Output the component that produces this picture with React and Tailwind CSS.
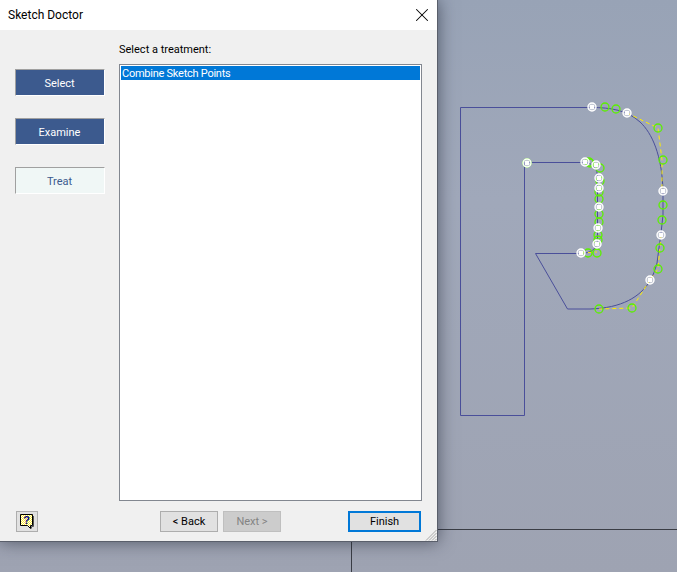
import React from "react";
import { X } from "lucide-react";

const whitePoints = [
  [592, 107], [627, 113], [527, 163], [585, 162], [596, 165], [599, 178], [599, 188], [599, 207],
  [598, 228], [597, 244], [581, 253], [663, 191], [661, 235], [650, 280],
];

const greenPoints = [
  [605, 107], [616, 109], [658, 128], [663, 160], [663, 205], [662, 220], [660, 248], [658, 269],
  [632, 308], [599, 309], [588, 253], [597, 253], [599, 214], [599, 222], [598, 235], [527, 163],
  [590, 163], [600, 168], [600, 181], [599, 199], [598, 240], [599, 192], [589, 162],
];

const SketchBackground = () => (
  <svg className="absolute inset-0" width="677" height="572" viewBox="0 0 677 572">
    <path d="M437.5 529.5H677M351.5 541V572" stroke="#3a3d45" fill="none" />
    <path
      d="M460.5 107.5H592C610 107.5 627 110 640 122C652 133 662 155 663 191V215L661 233L657 263C655 270 653 276 650 281C640 297 622 308 590 309H567.5L535.5 253.5H581C590 253 597 250 597.5 240V178C598 168 592 163 585 162.5H524.5V415.5H460.5Z"
      fill="none"
      stroke="#4a4f9a"
    />
    <g fill="none" stroke="#ffee00" strokeWidth="1" strokeDasharray="4 3">
      <path d="M627 113L658 128L662 160V190" />
      <path d="M650 280L632 308L599 309" />
      <path d="M581 253L597 252" />
      <path d="M661 235L658 269L650 280" />
    </g>
    {greenPoints.map(([x, y], i) => (
      <circle key={i} cx={x} cy={y} r="4" fill="none" stroke="#5cf000" strokeWidth="1.3" />
    ))}
    {whitePoints.map(([x, y], i) => (
      <g key={i}>
        <circle cx={x} cy={y} r="4" fill="#ffffff" fillOpacity="0.4" stroke="#ffffff" strokeWidth="1.4" />
        <rect x={x - 2} y={y - 2} width="4" height="4" fill="#ffffff" />
      </g>
    ))}
  </svg>
);

const StepButton = ({ label, active }) => (
  <button
    className={
      active
        ? "w-[90px] h-[27px] pt-[4px] pr-[1px] flex items-center justify-center bg-[#f0f7f6] text-[#3c5a8e] border-t border-l border-t-[#a0a0a0] border-l-[#a0a0a0] border-r border-b border-r-white border-b-white"
        : "w-[90px] h-[27px] pt-[4px] pr-[1px] flex items-center justify-center bg-[#3c5a8e] text-white border-t border-l border-t-[#a0a0a0] border-l-[#a0a0a0] border-r border-b border-r-white border-b-white"
    }
  >
    {label}
  </button>
);

const HelpIcon = () => (
  <svg width="16" height="17" viewBox="0 0 16 17">
    <defs>
      <pattern id="helpDots" width="2" height="2" patternUnits="userSpaceOnUse">
        <rect width="2" height="2" fill="#ffffff" />
        <rect width="1" height="1" fill="#ffee33" />
        <rect x="1" y="1" width="1" height="1" fill="#ffee33" />
      </pattern>
    </defs>
    <path d="M1.5 1.5H13.5V12.5H11.5V15.5L8.5 12.5H1.5Z" fill="url(#helpDots)" stroke="#000000" />
    <path d="M14.5 3V13.5H12.5V15.5" fill="none" stroke="#555555" />
    <text x="7.5" y="11" textAnchor="middle" fontSize="11" fontWeight="700" fill="#000080" fontFamily="'Liberation Sans', sans-serif">
      ?
    </text>
  </svg>
);

const ResizeGrip = () => (
  <svg className="absolute right-0 bottom-0" width="12" height="12" viewBox="0 0 12 12">
    <path d="M11.5 1L1 11.5M11.5 4L4 11.5M11.5 7L7 11.5M11.5 10L10 11.5" stroke="#a8a8a8" fill="none" />
  </svg>
);

const App = () => {
  return (
    <div className="relative w-[677px] h-[572px] overflow-hidden bg-linear-to-b from-[#98a3b6] via-[#a0a8ba] via-35% to-[#9ea3b2] text-[11px] text-[#1a1a1a] font-['Roboto','Open_Sans',sans-serif]">
      <SketchBackground />

      <div className="absolute top-0 left-0 w-[438px] h-[542px] flex flex-col bg-[#f0f0f0] border-r border-b border-[#5a5f6b] shadow-[0_0_16px_rgba(30,35,50,0.6)]">
        <div className="h-[30px] flex items-center justify-between bg-white pl-2 pr-[4px]">
          <span className="text-[12px] text-black">Sketch Doctor</span>
          <X size={22} strokeWidth={1.1} className="text-black" />
        </div>

        <div className="flex-1 flex min-h-0">
          <div className="w-[119px] flex flex-col gap-[22px] pl-[15px] pt-[39px]">
            <StepButton label="Select" />
            <StepButton label="Examine" />
            <StepButton label="Treat" active />
          </div>
          <div className="flex-1 flex flex-col pr-[15px] pt-[12px]">
            <div className="h-[22px] leading-[16px] text-black">Select a treatment:</div>
            <div className="flex-1 bg-white border border-[#828790] p-[1px]">
              <div className="h-[14px] leading-[15px] pl-[1px] tracking-[-0.25px] bg-[#0078d7] text-white">Combine Sketch Points</div>
            </div>
          </div>
        </div>

        <div className="relative h-[40px] flex items-start pt-[10px] pl-4 pr-[16px]">
          <div className="w-[22px] h-[21px] flex items-center justify-center bg-[#e1e1e1] border border-[#adadad]">
            <HelpIcon />
          </div>
          <button className="ml-[122px] w-[58px] h-[21px] pt-[1px] flex items-center justify-center bg-[#e1e1e1] border border-[#adadad] text-black">
            &lt; Back
          </button>
          <button className="ml-[5px] w-[58px] h-[21px] pt-[1px] flex items-center justify-center bg-[#cccccc] border border-[#bfbfbf] text-[#838383]">
            Next &gt;
          </button>
          <button className="ml-auto w-[73px] h-[21px] pt-[1px] flex items-center justify-center bg-[#e1e1e1] border-2 border-[#0078d7] text-black">
            Finish
          </button>
          <ResizeGrip />
        </div>
      </div>
    </div>
  );
};

export default App;
